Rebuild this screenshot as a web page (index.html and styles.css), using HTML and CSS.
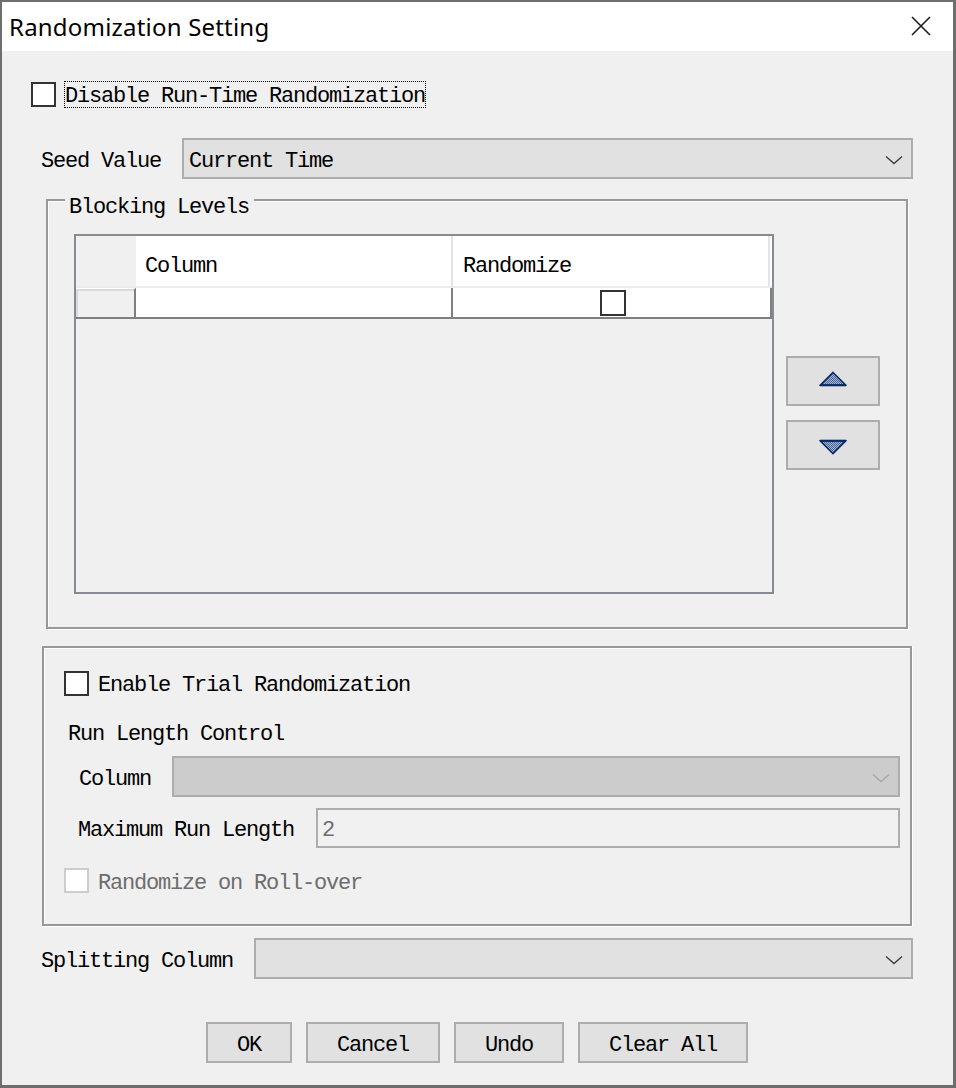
FILE: index.html
```html
<!DOCTYPE html>
<html>
<head>
<meta charset="utf-8">
<link rel="stylesheet" href="styles.css">
</head>
<body>
<div class="window">
  <div class="titlebar">
    <span class="title">Randomization Setting</span>
    <svg class="close" width="20" height="20" viewBox="0 0 20 20"><path d="M1 1L19 19M19 1L1 19" stroke="#1b1b1b" stroke-width="1.6" fill="none"/></svg>
  </div>
  <div class="content">
    <div class="row-disable">
      <span class="cb"></span>
      <span class="focus">Disable Run-Time Randomization</span>
    </div>

    <div class="field-row seed">
      <span class="lbl lbl-seed">Seed Value</span>
      <div class="combo combo-seed">
        <span class="ctext">Current Time</span>
        <svg class="chev" width="18" height="10" viewBox="0 0 18 10"><path d="M1 1.5L9 8.5L17 1.5" fill="none" stroke="#3c3c3c" stroke-width="1.4"/></svg>
      </div>
    </div>

    <div class="group group1">
      <span class="legend">Blocking Levels</span>
      <div class="g1-body">
        <div class="grid">
          <div class="grid-head">
            <div class="gh-corner"></div>
            <div class="gh-cell">Column</div>
            <div class="gh-cell">Randomize</div>
            <div class="gh-fill"></div>
          </div>
          <div class="grid-row">
            <div class="rh"></div>
            <div class="dc dc1"></div>
            <div class="dc dc2"><span class="cb cb-cell"></span></div>
          </div>
        </div>
        <div class="updown">
          <div class="arrow-btn up">
            <svg width="28" height="16" viewBox="0 0 28 16">
              <defs>
                <pattern id="dith1" width="2" height="2" patternUnits="userSpaceOnUse">
                  <rect width="2" height="2" fill="#a4b3cf"/>
                  <rect width="1" height="1" fill="#4a6597"/>
                  <rect x="1" y="1" width="1" height="1" fill="#4a6597"/>
                </pattern>
              </defs>
              <polygon points="14,1.5 26.5,14 1.5,14" fill="url(#dith1)" stroke="#0a2a64" stroke-width="1.6" stroke-linejoin="miter"/>
              <line x1="1" y1="14.3" x2="27" y2="14.3" stroke="#0a2a64" stroke-width="2"/>
            </svg>
          </div>
          <div class="arrow-btn down">
            <svg width="28" height="16" viewBox="0 0 28 16">
              <defs>
                <pattern id="dith2" width="2" height="2" patternUnits="userSpaceOnUse">
                  <rect width="2" height="2" fill="#a4b3cf"/>
                  <rect width="1" height="1" fill="#4a6597"/>
                  <rect x="1" y="1" width="1" height="1" fill="#4a6597"/>
                </pattern>
              </defs>
              <polygon points="1.5,2 26.5,2 14,14.5" fill="url(#dith2)" stroke="#0a2a64" stroke-width="1.6" stroke-linejoin="miter"/>
              <line x1="1" y1="1.7" x2="27" y2="1.7" stroke="#0a2a64" stroke-width="2"/>
            </svg>
          </div>
        </div>
      </div>
    </div>

    <div class="group group2">
      <div class="g2-chk">
        <span class="cb"></span>
        <span class="ctext cb-label">Enable Trial Randomization</span>
      </div>
      <div class="rlc">Run Length Control</div>
      <div class="field-row col-row">
        <span class="lbl lbl-col">Column</span>
        <div class="combo combo-col disabled">
          <span class="ctext"></span>
          <svg class="chev" width="18" height="10" viewBox="0 0 18 10"><path d="M1 1.5L9 8.5L17 1.5" fill="none" stroke="#a8a8a8" stroke-width="1.4"/></svg>
        </div>
      </div>
      <div class="field-row max-row">
        <span class="lbl lbl-max">Maximum Run Length</span>
        <div class="textbox"><span class="ctext">2</span></div>
      </div>
      <div class="g2-chk roll">
        <span class="cb cb-dis"></span>
        <span class="ctext cb-label dis">Randomize on Roll-over</span>
      </div>
    </div>

    <div class="field-row split">
      <span class="lbl lbl-split">Splitting Column</span>
      <div class="combo combo-split">
        <span class="ctext"></span>
        <svg class="chev" width="18" height="10" viewBox="0 0 18 10"><path d="M1 1.5L9 8.5L17 1.5" fill="none" stroke="#3c3c3c" stroke-width="1.4"/></svg>
      </div>
    </div>

    <div class="buttons">
      <div class="btn b-ok">OK</div>
      <div class="btn b-cancel">Cancel</div>
      <div class="btn b-undo">Undo</div>
      <div class="btn b-clear">Clear All</div>
    </div>
  </div>
</div>
</body>
</html>
```
FILE: styles.css
```css
* { box-sizing: border-box; }
html, body { margin: 0; padding: 0; }
body { width: 956px; height: 1088px; background: #f0f0f0; overflow: hidden; }

.window {
  width: 956px;
  height: 1088px;
  border-style: solid;
  border-color: #6e6e6e;
  border-width: 2px 3px 3px 2px;
  background: #f0f0f0;
}

.titlebar {
  height: 49px;
  background: #fff;
  display: flex;
  align-items: center;
  justify-content: space-between;
  padding: 0 22px 0 7px;
}
.title {
  font-family: "Noto Sans", "Open Sans", sans-serif;
  font-size: 24px;
  letter-spacing: 0.2px;
  line-height: 49px;
  color: #000;
}
.close { margin-top: -2px; }

.content {
  font-family: "Liberation Mono", "DejaVu Sans Mono", monospace;
  font-size: 22px;
  letter-spacing: -1.2px;
  color: #000;
}

.cb {
  display: block;
  flex: none;
  width: 25px;
  height: 25px;
  border: 2px solid #333;
  background: #fff;
}
.cb-dis { border-color: #cdcdcd; }

.row-disable {
  display: flex;
  align-items: center;
  height: 27px;
  margin-top: 30px;
  padding-left: 29px;
}
.focus {
  margin-left: 8px;
  height: 27px;
  border: 1px dotted #000;
  padding: 5px 0 0 0;
  line-height: 20px;
  white-space: nowrap;
}

.field-row {
  display: flex;
  align-items: center;
  height: 41px;
}
.lbl {
  flex: none;
  white-space: nowrap;
  padding-top: 5px;
}
.ctext { white-space: nowrap; padding-top: 5px; }

.seed { margin-top: 30px; padding-left: 39px; }
.lbl-seed { width: 141px; }

.combo {
  flex: none;
  height: 41px;
  border: 2px solid #adadad;
  background: #e1e1e1;
  display: flex;
  align-items: center;
  justify-content: space-between;
  padding: 0 8px 0 5px;
}
.combo-seed { width: 731px; }
.combo.disabled { background: #cccccc; }
.chev { flex: none; margin-top: 2px; }

/* group boxes */
.group {
  border: 2px solid #9a9894;
  box-shadow: inset 1px 1px 0 #fff, 1px 1px 0 #fff;
}
.group1 {
  margin: 20px 0 0 44px;
  width: 862px;
  height: 430px;
}
.legend {
  display: block;
  width: fit-content;
  height: 24px;
  line-height: 24px;
  margin: -7px 0 0 17px;
  padding: 2px 5px 0 4px;
  background: #f0f0f0;
  white-space: nowrap;
}
.g1-body {
  display: flex;
  margin-top: 16px;
  padding-left: 26px;
}
.grid {
  flex: none;
  width: 700px;
  height: 360px;
  border: 2px solid #868b94;
  background: #f0f0f0;
}
.grid-head {
  display: flex;
  height: 52px;
  border-bottom: 2px solid #ececec;
}
.gh-corner { width: 60px; background: #f0f0f0; }
.gh-cell {
  width: 317px;
  background: #fff;
  border-right: 2px solid #e4e4e4;
  padding: 19px 0 0 9px;
  line-height: 24px;
  white-space: nowrap;
}
.gh-cell + .gh-cell { padding-left: 10px; }
.gh-fill { width: 2px; background: #fff; }

.grid-row {
  display: flex;
  height: 31px;
  border-bottom: 2px solid #7f7f7f;
  background: #fff;
}
.rh {
  width: 60px;
  background: #f0f0f0;
  border-top: 1px solid #fff;
  border-right: 2px solid #7f7f7f;
  box-shadow: inset 2px 2px 0 #dadada;
}
.dc {
  background: #fff;
  border-right: 2px solid #7f7f7f;
  display: flex;
  align-items: center;
  justify-content: center;
}
.dc1 { width: 317px; }
.dc2 { width: 319px; }
.cb-cell { width: 26px; height: 26px; margin-left: 2px; }

.updown {
  display: flex;
  flex-direction: column;
  gap: 14px;
  margin-left: 12px;
  padding-top: 122px;
}
.arrow-btn {
  width: 94px;
  height: 50px;
  border: 2px solid #adadad;
  background: #e1e1e1;
  display: flex;
  align-items: center;
  justify-content: center;
}
.arrow-btn.up { padding-bottom: 4px; }
.arrow-btn.down { padding-top: 4px; }

.group2 {
  margin: 17px 0 0 40px;
  width: 870px;
  height: 280px;
}
.g2-chk {
  display: flex;
  align-items: center;
  height: 26px;
  margin-top: 22px;
  padding-left: 20px;
}
.cb-label { margin-left: 9px; }
.dis { color: #6d6d6d; }
.rlc {
  height: 26px;
  line-height: 26px;
  margin-top: 26px;
  padding-left: 24px;
  white-space: nowrap;
}
.col-row { margin-top: 8px; padding-left: 35px; }
.lbl-col { width: 93px; }
.combo-col { width: 728px; }
.max-row { margin-top: 11px; padding-left: 34px; height: 40px; }
.lbl-max { width: 238px; }
.textbox {
  flex: none;
  width: 584px;
  height: 40px;
  border: 2px solid #adadad;
  background: #f1f1f1;
  color: #6d6d6d;
  display: flex;
  align-items: center;
  padding-left: 4px;
}
.roll { margin-top: 20px; height: 25px; }

.split { margin-top: 12px; padding-left: 39px; }
.lbl-split { width: 213px; }
.combo-split { width: 659px; }

.buttons {
  display: flex;
  gap: 14px;
  margin-top: 43px;
  padding-left: 204px;
}
.btn {
  height: 41px;
  border: 2px solid #adadad;
  background: #e1e1e1;
  display: flex;
  align-items: center;
  justify-content: center;
  padding-top: 6px;
  white-space: nowrap;
}
.b-ok { width: 86px; }
.b-cancel { width: 134px; }
.b-undo { width: 110px; }
.b-clear { width: 170px; }
```
